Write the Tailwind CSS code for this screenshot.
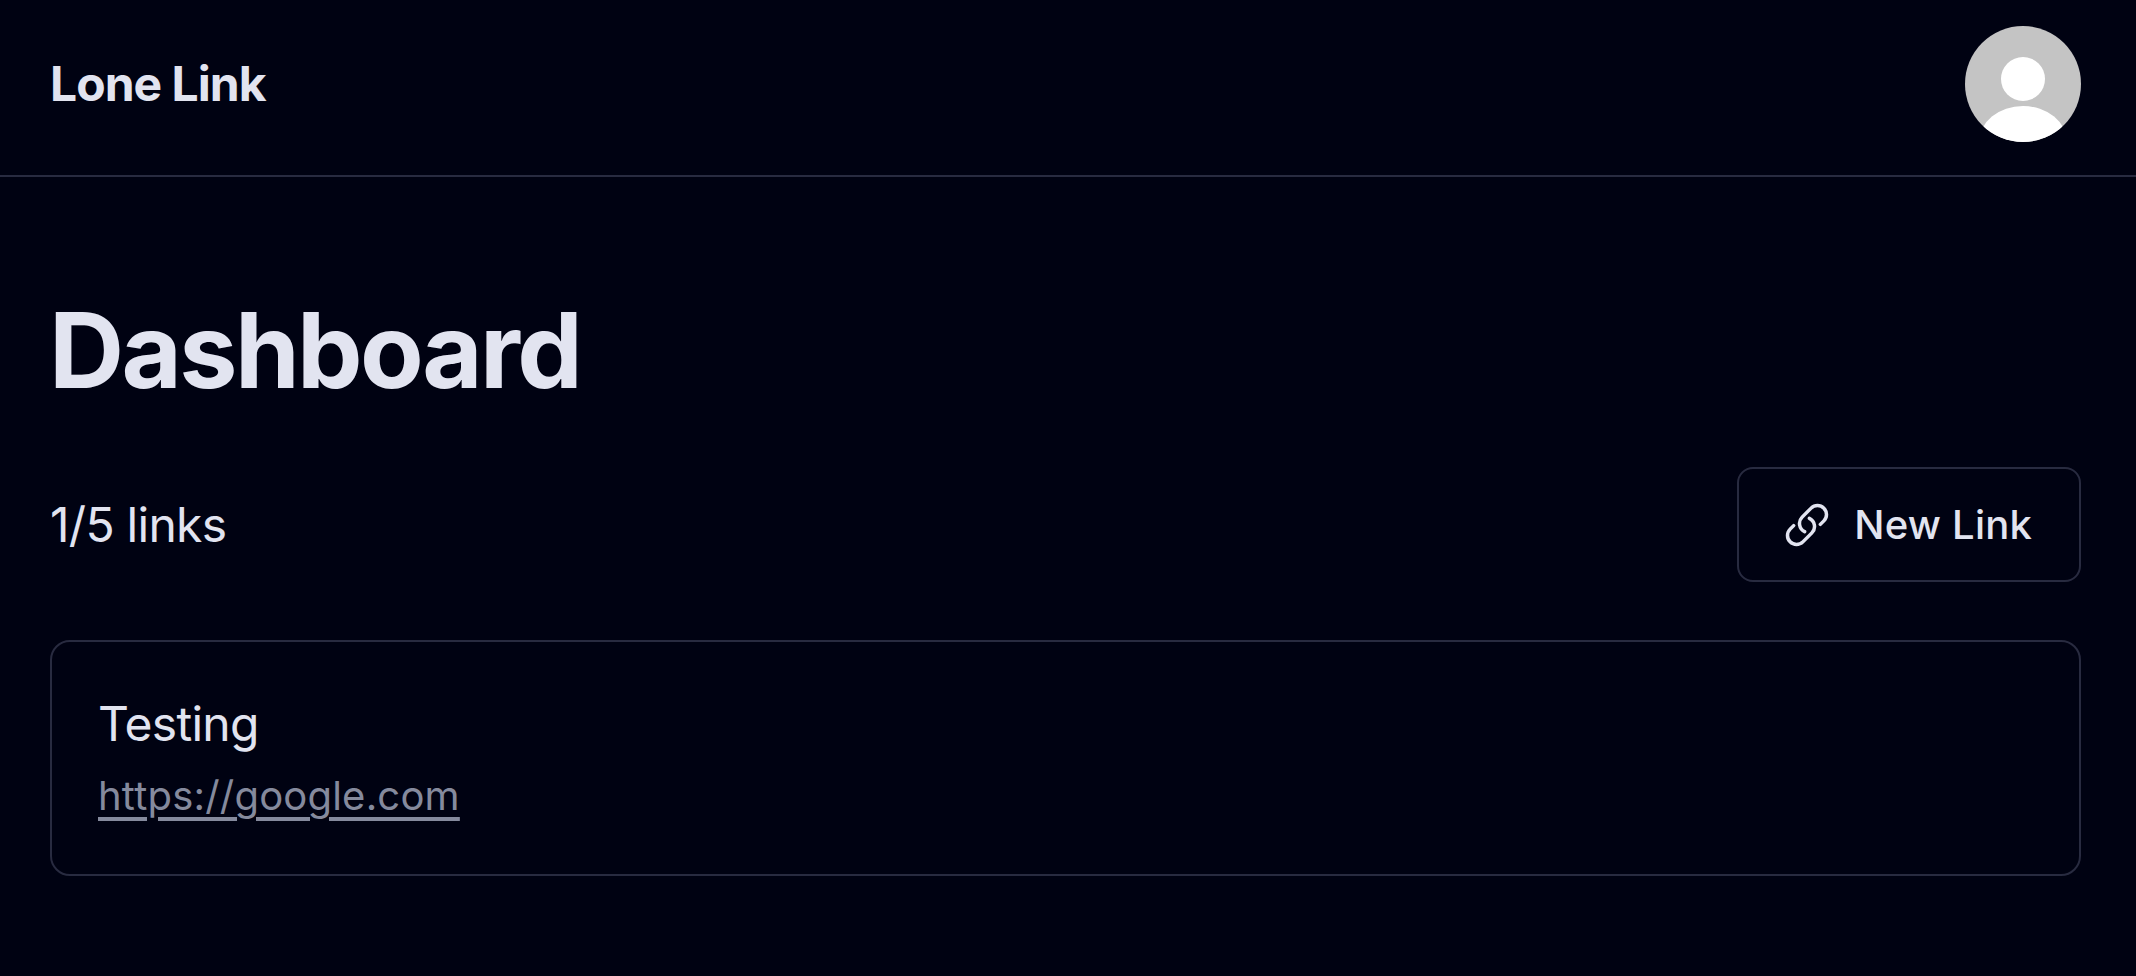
<!DOCTYPE html>
<html lang="en">
<head>
    <meta charset="UTF-8">
    <meta name="viewport" content="width=device-width, initial-scale=1.0">
    <title>Lone Link</title>
    <script src="https://cdn.jsdelivr.net/npm/@tailwindcss/browser@4"></script>
</head>
<body class="bg-[#000212] text-[#e2e4f0] h-screen overflow-hidden font-['Inter',sans-serif]">
    <header class="flex items-center justify-between pl-[50px] pr-[55px] pt-[26px] pb-[33px] border-b-2 border-[#282b40]">
        <a href="#" class="text-[48px] font-bold leading-none tracking-[-0.02em]">Lone Link</a>
        <div class="w-[116px] h-[116px] rounded-full overflow-hidden">
            <svg viewBox="0 0 116 116" class="w-full h-full">
                <rect width="116" height="116" fill="#c4c4c4"/>
                <circle cx="58" cy="53" r="22" fill="#fff"/>
                <ellipse cx="58" cy="116" rx="44" ry="36" fill="#fff"/>
            </svg>
        </div>
    </header>
    <main class="pl-[50px] pr-[55px]">
        <h1 class="mt-[121px] -ml-[1px] text-[104px] font-bold leading-none tracking-[-0.025em]">Dashboard</h1>
        <div class="mt-[65px] flex items-center justify-between">
            <p class="text-[48px] leading-none tracking-[-0.015em]">1/5 links</p>
            <button class="flex items-center gap-[23px] h-[115px] pl-[44px] pr-[47px] rounded-[16px] border-2 border-[#282b40] text-[40px] font-medium tracking-[0.005em]">
                <svg viewBox="0 0 24 24" fill="none" stroke="currentColor" stroke-width="1.75" stroke-linecap="round" stroke-linejoin="round" class="w-[48px] h-[48px]">
                    <path d="M13.19 8.688a4.5 4.5 0 0 1 1.242 7.244l-4.5 4.5a4.5 4.5 0 0 1-6.364-6.364l1.757-1.757m13.35-.622 1.757-1.757a4.5 4.5 0 0 0-6.364-6.364l-4.5 4.5a4.5 4.5 0 0 0 1.242 7.244"/>
                </svg>
                New Link
            </button>
        </div>
        <div class="mt-[58px] h-[236px] pl-[46px] pr-[48px] pt-[58px] rounded-[20px] border-2 border-[#282b40]">
            <p class="text-[48px] leading-none tracking-[-0.015em]">Testing</p>
            <a href="#" class="block w-fit mt-[28px] text-[40px] leading-none tracking-[0.005em] text-[#858a9d] underline underline-offset-[7px]">https://google.com</a>
        </div>
    </main>
</body>
</html>
